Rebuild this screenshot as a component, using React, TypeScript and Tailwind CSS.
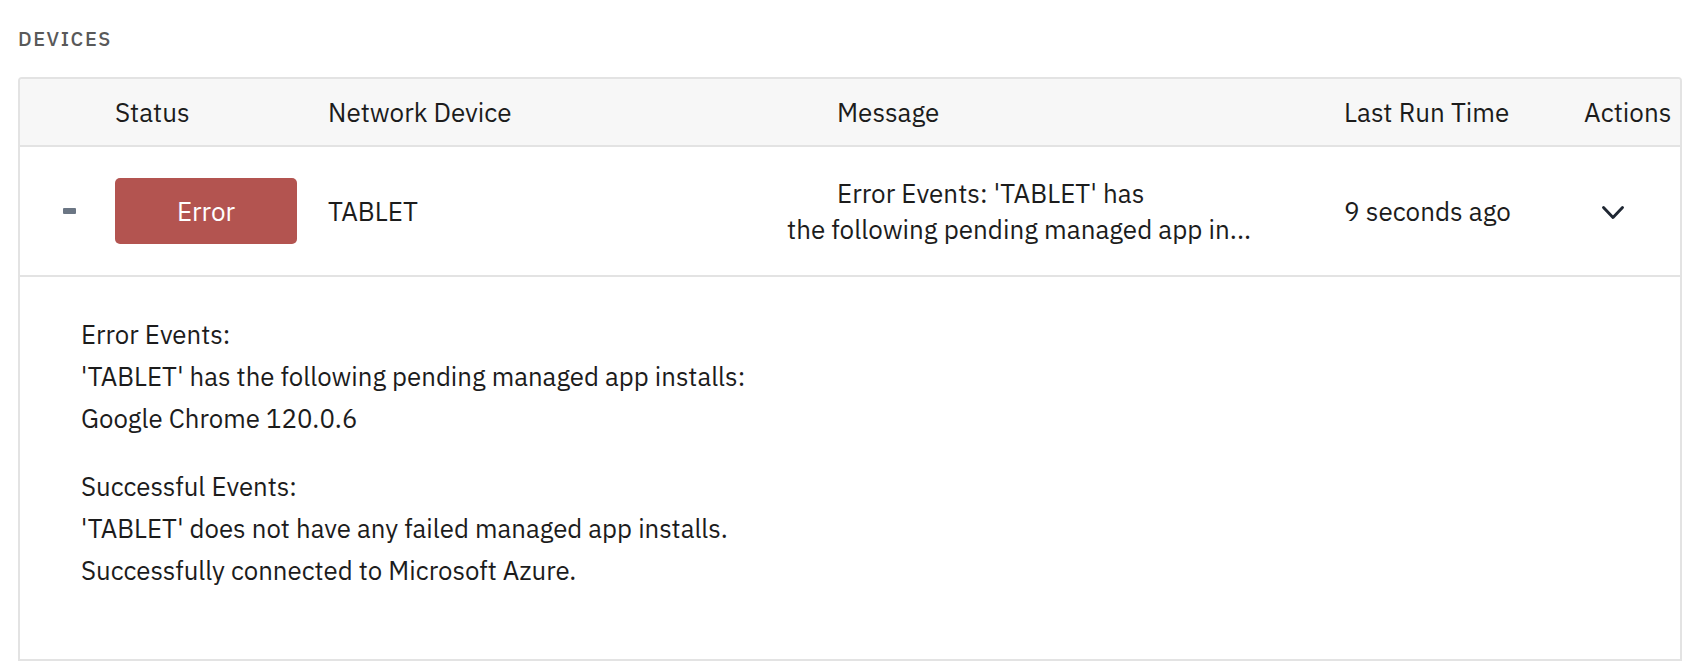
import React from 'react';

const font = { fontFamily: '"IBM Plex Sans", "Noto Sans", "Open Sans", sans-serif' };

const detailLines = {
  errors: [
    'Error Events:',
    "'TABLET' has the following pending managed app installs:",
    'Google Chrome 120.0.6',
  ],
  success: [
    'Successful Events:',
    "'TABLET' does not have any failed managed app installs.",
    'Successfully connected to Microsoft Azure.',
  ],
};

const ChevronDown: React.FC = () => (
  <svg width="26" height="17" viewBox="0 0 26 17" fill="none">
    <path d="M3.5 3.5l9.5 10 9.5-10" stroke="#1f2733" strokeWidth="2.9" strokeLinecap="round" strokeLinejoin="round" />
  </svg>
);

export default function App() {
  return (
    <div className="w-full h-[672px] bg-white pl-[18px] pr-[12px] pt-[28px] text-[#1c1c1c]" style={font}>
      <div className="text-[20px] font-medium tracking-[0.08em] text-[#595959] uppercase leading-[22px]">Devices</div>

      <div className="mt-[27px] border-2 border-[#e3e3e3] rounded-t-[4px] overflow-hidden">
        {/* header */}
        <div className="grid grid-cols-[95px_213px_452px_564px_240px_1fr] h-[68px] items-center bg-[#f7f7f7] border-b-2 border-[#e3e3e3] text-[26px]">
          <div></div>
          <div>Status</div>
          <div>Network Device</div>
          <div className="pl-[57px]">Message</div>
          <div>Last Run Time</div>
          <div>Actions</div>
        </div>

        {/* row */}
        <div className="grid grid-cols-[95px_213px_452px_564px_240px_1fr] h-[130px] items-center border-b-2 border-[#e3e3e3] text-[26px]">
          <div className="flex justify-center pl-[4px]">
            <div className="w-[13px] h-[6px] bg-[#6b7684] rounded-[1px]"></div>
          </div>
          <div>
            <div className="w-[182px] h-[66px] rounded-[5px] bg-[#b35450] text-white flex items-center justify-center">Error</div>
          </div>
          <div>TABLET</div>
          <div className="flex flex-col items-start leading-[36px] whitespace-nowrap">
            <div className="ml-[57px]">Error Events: 'TABLET' has</div>
            <div className="ml-[7px]">the following pending managed app in...</div>
          </div>
          <div>9 seconds ago</div>
          <div className="pl-[16px] pt-[2px]">
            <ChevronDown />
          </div>
        </div>

        {/* expanded detail */}
        <div className="h-[382px] pl-[61px] pt-[37px] text-[25.8px] leading-[42px]">
          {detailLines.errors.map((l) => (
            <div key={l}>{l}</div>
          ))}
          <div className="mt-[26px]">
            {detailLines.success.map((l) => (
              <div key={l}>{l}</div>
            ))}
          </div>
        </div>
      </div>
    </div>
  );
}
